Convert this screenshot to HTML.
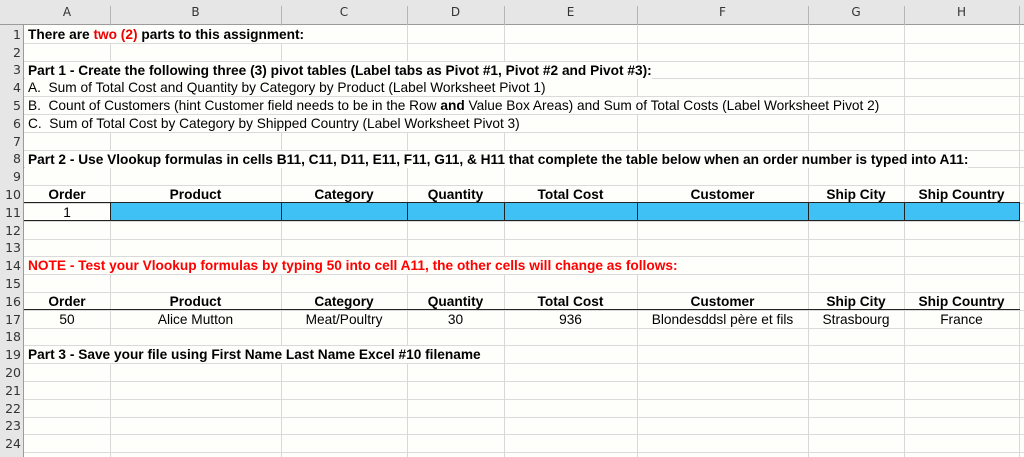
<!DOCTYPE html>
<html><head><meta charset="utf-8"><style>
*{margin:0;padding:0;box-sizing:border-box}
body{width:1024px;height:457px;overflow:hidden;background:#fefefa;font-family:"Liberation Sans",Arial,sans-serif;position:relative}
.hdr{position:absolute;top:0;left:0;width:1024px;height:25px;background:#e6e6e6;border-bottom:1px solid #9b9b9b}
.rh{position:absolute;left:0;width:24px;background:#e6e6e6;border-right:1px solid #9b9b9b}
.vl{position:absolute;width:1px;background:#d8d8d8}
.hl{position:absolute;height:1px;background:#dadada;left:24px}
.ch{position:absolute;top:5px;color:#333;text-align:center;font-family:"DejaVu Sans",sans-serif;font-size:12px}
.rn{position:absolute;left:0;width:21px;text-align:right;color:#333;font-family:"DejaVu Sans",sans-serif;font-size:12.5px}
.t{position:absolute;font-size:13.7px;white-space:nowrap;color:#000;line-height:17px;height:17px}
.ov{background:#fefefa;padding-left:3px}
.b{font-weight:bold}
.c{text-align:center}
</style></head><body>
<div class="hdr"></div>
<div class="rh" style="top:25px;height:432px"></div>
<div id="g"></div>
<script>
var cols=[24,110,281,407,504,637,808,904,1019];
var L="ABCDEFGH";var h="";
for(var i=0;i<8;i++){h+='<div class="ch" style="left:'+cols[i]+'px;width:'+(cols[i+1]-cols[i])+'px">'+L[i]+'</div>';}
for(var i=1;i<9;i++){h+='<div class="vl" style="left:'+cols[i]+'px;top:25px;height:432px"></div>';h+='<div class="vl" style="left:'+cols[i]+'px;top:6px;height:19px;background:#b5b5b5"></div>';}
for(var r=1;r<=24;r++){var y=25+r*17.8;h+='<div class="hl" style="top:'+Math.round(y)+'px;width:1000px"></div>';h+='<div class="rn" style="top:'+Math.round(y-16)+'px">'+r+'</div>';}
document.getElementById('g').innerHTML=h;
function T(r){return Math.round(25+(r-1)*17.8)}
</script>
<div id="c"></div>
<script>
var s="";
function add(r,x,w,txt,cls,st){s+='<div class="t '+(cls||'')+'" style="top:'+(T(r)+1)+'px;left:'+x+'px;'+(w?'width:'+w+'px;':'')+(st||'')+'">'+txt+'</div>';}
s+='<div style="position:absolute;left:110px;top:'+(T(11))+'px;width:909px;height:18px;background:#3fc1f6"></div>';
[281,407,504,637,808,904].forEach(function(x){s+='<div style="position:absolute;left:'+x+'px;top:'+T(11)+'px;width:1px;height:18px;background:#222"></div>'});
s+='<div style="position:absolute;left:110px;top:'+T(11)+'px;width:1px;height:18px;background:#222"></div>';
s+='<div style="position:absolute;left:1019px;top:'+T(11)+'px;width:1px;height:18px;background:#222"></div>';
s+='<div style="position:absolute;left:24px;top:'+(T(11)-1)+'px;width:996px;height:1px;background:#222"></div>';
s+='<div style="position:absolute;left:24px;top:'+(T(12)-1)+'px;width:996px;height:1px;background:#222"></div>';
s+='<div style="position:absolute;left:24px;top:'+(T(17)-1)+'px;width:996px;height:1px;background:#222"></div>';
add(1,25,0,'There are <span style="color:#e00">two (2)</span> parts to this assignment:','b ov');
add(3,25,0,'Part 1 - Create the following three (3) pivot tables (Label tabs as Pivot #1, Pivot #2 and Pivot #3):','b ov');
add(4,25,0,'A.&nbsp; Sum of Total Cost and Quantity by Category by Product (Label Worksheet Pivot 1)','ov');
add(5,25,0,'B.&nbsp; Count of Customers (hint Customer field needs to be in the Row <b>and</b> Value Box Areas) and Sum of Total Costs (Label Worksheet Pivot 2)','ov');
add(6,25,0,'C.&nbsp; Sum of Total Cost by Category by Shipped Country (Label Worksheet Pivot 3)','ov');
add(8,25,0,'Part 2 - Use Vlookup formulas in cells B11, C11, D11, E11, F11, G11, &amp; H11 that complete the table below when an order number is typed into A11:','b ov');
add(14,25,0,'NOTE - Test your Vlookup formulas by typing 50 into cell A11, the other cells will change as follows:','b ov','color:#f00');
add(19,25,0,'Part 3 - Save your file using First Name Last Name Excel #10 filename','b ov');
var hd=['Order','Product','Category','Quantity','Total Cost','Customer','Ship City','Ship Country'];
var v=['50','Alice Mutton','Meat/Poultry','30','936','Blondesddsl p&egrave;re et fils','Strasbourg','France'];
for(var i=0;i<8;i++){var w=cols[i+1]-cols[i];add(10,cols[i],w,hd[i],'b c');add(16,cols[i],w,hd[i],'b c');add(17,cols[i],w,v[i],'c');}
add(11,24,86,'1','c');
document.getElementById('c').innerHTML=s;
</script>
</body></html>
